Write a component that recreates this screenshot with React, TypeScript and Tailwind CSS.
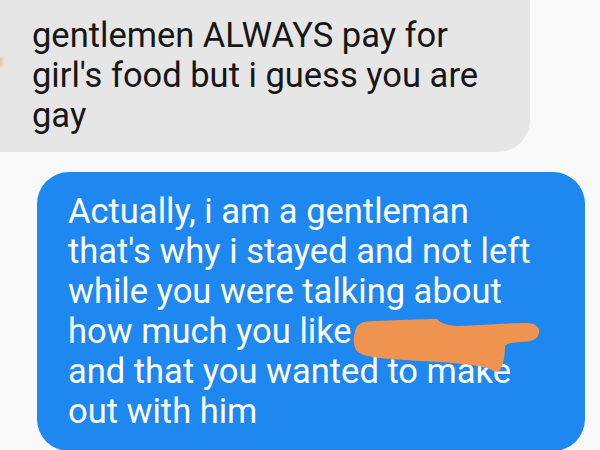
import React from 'react';

const grayLines = ['gentlemen ALWAYS pay for', "girl's food but i guess you are", 'gay'];

const blueLines = [
  'Actually, i am a gentleman',
  "that's why i stayed and not left",
  'while you were talking about',
  'how much you like',
  'and that you wanted to make',
  'out with him',
];

// the orange marker scribble that hides a name
const Scribble: React.FC = () => (
  <svg className="absolute left-[350px] top-[316px]" width="194" height="60" viewBox="0 0 194 60">
    <path
      d="M5 16 C6 8 12 5 25 5 C50 4 75 3 87 3 C89 6 95 9 107 10 C130 9 160 7 177 7 C186 7 190 12 189 17 C188 23 182 26 170 26 C162 27 157 27 155 30 C155 38 154 48 150 54 C148 57 144 56 138 52 C120 48 95 46 70 45 C40 43 15 42 8 36 C3 32 3 22 5 16 Z"
      fill="#ee9350"
    />
  </svg>
);

export default function App() {
  return (
    <div className="relative w-[600px] h-[450px] overflow-hidden bg-[#f9f9f9] font-['Roboto',sans-serif]">
      <div className="-ml-[30px] -mt-[40px] w-[560px] rounded-[32px] bg-[#e6e6e6] pl-[62px] pt-[55px] pb-[17px] text-[34.5px] leading-[40px] text-[#161616]">
        {grayLines.map((line, i) => (
          <div key={i}>{line}</div>
        ))}
      </div>
      <div className="ml-[37px] mt-[20px] w-[548px] rounded-[32px] bg-[#1f87f0] pl-[31px] pt-[19px] pb-[20px] text-[34.5px] leading-[40px] text-white">
        {blueLines.map((line, i) => (
          <div key={i}>{line}</div>
        ))}
      </div>
      <Scribble />
      <div className="absolute left-[-3px] top-[57px] h-[10px] w-[6px] rounded-full bg-[#f2b27a] opacity-60 blur-[1px]" />
    </div>
  );
}
